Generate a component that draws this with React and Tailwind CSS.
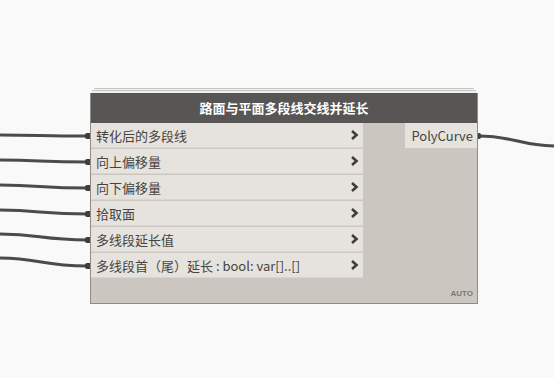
import React from 'react';

const inputs = [
  '转化后的多段线',
  '向上偏移量',
  '向下偏移量',
  '拾取面',
  '多线段延长值',
  '多线段首（尾）延长 : bool: var[]..[]',
];

// wire start heights at the left edge of the window
const wireStarts = [135, 160, 185, 210, 234, 258];

function Chevron() {
  return (
    <svg width="9" height="12" viewBox="0 0 9 12" className="shrink-0">
      <path d="M2 2 L6.5 6 L2 10" fill="none" stroke="#3f3d3b" strokeWidth="2.6" />
    </svg>
  );
}

function Wires() {
  return (
    <svg className="absolute inset-0" width="554" height="378">
      {wireStarts.map((y0, i) => {
        const y = 136 + i * 26;
        return (
          <path
            key={i}
            d={`M-2 ${y0} C 40 ${y0}, 40 ${y}, 88 ${y}`}
            fill="none"
            stroke="#4b4b4b"
            strokeWidth="3"
          />
        );
      })}
      <path d="M478 136 C 515 136, 520 146, 556 146" fill="none" stroke="#4b4b4b" strokeWidth="3" />
    </svg>
  );
}

export default function App() {
  return (
    <div
      className="relative w-[554px] h-[378px] bg-[#f9f9f9] overflow-hidden"
      style={{ fontFamily: '"Noto Sans CJK SC", "Open Sans", sans-serif' }}
    >
      <Wires />

      {/* input port nubs */}
      <div className="absolute left-[85px] top-[133px] flex flex-col gap-[20px]">
        {inputs.map((_, i) => (
          <div key={i} className="w-[6px] h-[6px] bg-[#3d3d3d] rounded-l-[2px]" />
        ))}
      </div>
      <div className="absolute left-[476px] top-[133px] w-[5px] h-[6px] bg-[#3d3d3d] rounded-r-[2px]" />

      {/* node */}
      <div className="absolute left-[90px] top-[88px] w-[388px]">
        <div className="mx-[4px] h-[2px] border-t border-[#c9c7c3] bg-[#f1f0ee]" />
        <div className="mx-[2px] h-[3px] border-t border-[#c9c7c3] bg-[#f1f0ee]" />
        <div className="border border-[#8f8c88] border-t-0 bg-[#cbc7c0]">
          <div className="h-[30px] bg-[#585654] flex items-center justify-center text-white text-[13px] font-bold leading-none pb-[1px]">
            路面与平面多段线交线并延长
          </div>
          <div className="flex">
            <div className="w-[272px] flex flex-col">
              {inputs.map((label, i) => (
                <div
                  key={i}
                  className="h-[25px] mb-[1px] bg-[#e6e3de] border-b border-[#d9d6d1] flex items-center justify-between pl-[5px] pr-[4px] text-[13px] text-[#46443f] leading-none"
                >
                  <span className="whitespace-nowrap">{label}</span>
                  <Chevron />
                </div>
              ))}
            </div>
            <div className="flex-1 flex justify-end items-start">
              <div className="w-[72px] h-[25px] bg-[#e6e3de] flex items-center justify-end pr-[4px] text-[13px] text-[#46443f] leading-none">
                PolyCurve
              </div>
            </div>
          </div>
          <div className="h-[24px] flex items-end justify-end pr-[4px] pb-[5px]">
            <span className="text-[8px] font-bold text-[#7c7975] leading-none" style={{ fontFamily: '"Liberation Sans", sans-serif' }}>
              AUTO
            </span>
          </div>
        </div>
      </div>
    </div>
  );
}
